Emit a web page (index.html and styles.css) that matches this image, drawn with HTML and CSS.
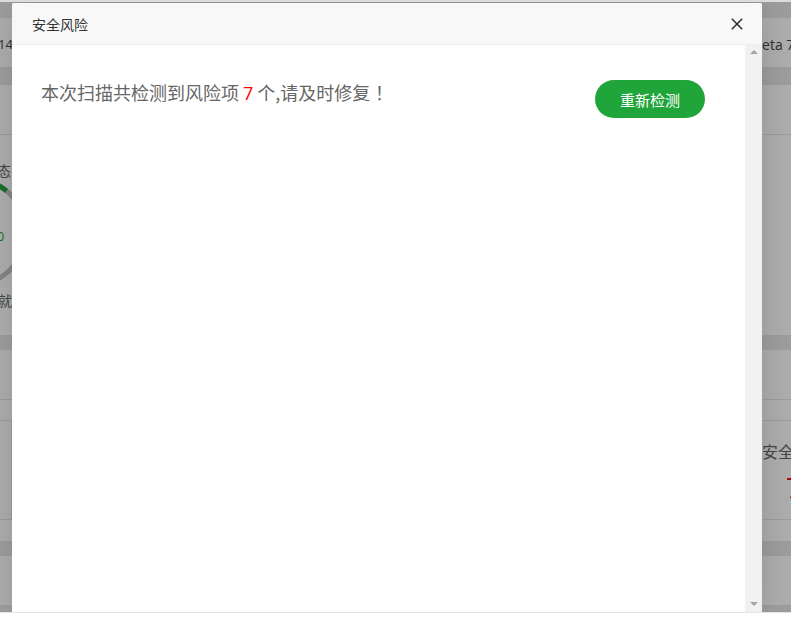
FILE: index.html
```html
<!DOCTYPE html>
<html lang="zh-CN">
<head>
<meta charset="utf-8">
<title>安全风险</title>
<link rel="stylesheet" href="styles.css">
</head>
<body>
<div class="topline"></div>
<div class="stage">
  <div class="page">
    <div class="card card-info">
      <span class="ver-left">14(0)</span>
      <span class="ver-right">Beta 7.4</span>
    </div>
    <div class="card">
      <div class="card-head"></div>
      <div class="card-body gauge-body">
        <svg class="gauge" width="60" height="200" viewBox="0 0 60 200">
          <text x="11" y="41" text-anchor="end" class="g-label">状态</text>
          <circle cx="-27" cy="97" r="53" fill="none" stroke="#c4c4c4" stroke-width="5"/>
          <path d="M -27 44 A 53 53 0 0 1 6.6 56" fill="none" stroke="#20a53a" stroke-width="5"/>
          <text x="4" y="106" text-anchor="end" class="g-value">90</text>
          <text x="-30" y="171" class="g-foot">系统就绪</text>
        </svg>
      </div>
    </div>
    <div class="card">
      <div class="card-head"></div>
      <div class="card-body stats-body">
        <div class="stats">
          <div class="stat stat-main"></div>
          <div class="stat stat-risk">
            <div class="stat-label">安全风险</div>
            <div class="stat-num">7</div>
          </div>
        </div>
      </div>
    </div>
    <div class="card">
      <div class="card-head"></div>
      <div class="card-body"></div>
    </div>
  </div>
  <div class="shade"></div>
  <div class="dialog">
    <div class="dialog-head">
      <span class="dialog-title">安全风险</span>
      <svg class="close" width="12" height="12" viewBox="0 0 12 12">
        <path d="M0.8 0.8 L11.2 11.2 M11.2 0.8 L0.8 11.2" stroke="#2b2b2b" stroke-width="1.5" fill="none"/>
      </svg>
    </div>
    <div class="dialog-body">
      <div class="content">
        <p class="summary">本次扫描共检测到风险项 <span class="red">7</span> 个,请及时修复<span class="bang" lang="zh-TW">！</span></p>
        <button class="btn-recheck">重新检测</button>
      </div>
      <div class="scrollbar">
        <span class="arrow-up"></span>
        <span class="arrow-down"></span>
      </div>
    </div>
  </div>
</div>
<div class="bottomline"></div>
</body>
</html>
```
FILE: styles.css
```css
* { box-sizing: border-box; }
html, body { margin: 0; padding: 0; background: #fff; }
body {
  font-family: "Noto Sans CJK SC", "Noto Sans", sans-serif;
  overflow: hidden;
  height: 626px;
}
.topline { height: 2px; background: #dcdcdc; }
.stage {
  position: relative;
  height: 610px;
  overflow: hidden;
}
.bottomline { height: 1px; background: #e4e4e4; }

/* background page */
.page {
  background: #e8e8e8;
  height: 100%;
  padding-top: 16px;
  display: flex;
  flex-direction: column;
}
.card { background: #fff; flex-shrink: 0; }
.card + .card { margin-top: 15px; }
.card-info {
  height: 49px;
  margin-bottom: 3px;
  display: grid;
  grid-template-columns: 753px 1fr;
  align-items: center;
  padding-top: 3px;
  font-family: "Open Sans", "Liberation Sans", sans-serif;
  font-size: 13px;
  color: #444;
  white-space: nowrap;
  overflow: hidden;
}
.ver-left { margin-left: -2px; }
.ver-right { font-size: 14px; }
.card-head { height: 50px; border-bottom: 1px solid #e6e6e6; }
.gauge-body { height: 200px; position: relative; }
.gauge { position: absolute; left: 0; top: 0; overflow: visible; }
.g-label, .g-foot { font-size: 14px; fill: #666; font-family: "Noto Sans CJK SC", sans-serif; }
.g-value { font-size: 12px; fill: #20a53a; font-family: "Open Sans", sans-serif; }
.stats-body { padding: 20px 0 21px; }
.stats {
  display: grid;
  grid-template-columns: 11px 751px 64px;
  height: 100px;
  border-top: 1px solid #e6e6e6;
  border-bottom: 1px solid #e6e6e6;
}
.stat-main { grid-column: 2; border-left: 1px solid #e6e6e6; }
.stat-risk { text-align: center; white-space: nowrap; }
.stat-label { margin-top: 19px; line-height: 22px; font-size: 16px; color: #666; }
.stat-num {
  margin-top: 8px;
  line-height: 34px;
  font-size: 28px;
  color: #f00;
  font-family: "Open Sans", "Liberation Sans", sans-serif;
}
.shade {
  position: absolute;
  inset: 0;
  background: rgba(0, 0, 0, 0.32);
}

/* dialog */
.dialog {
  position: absolute;
  top: 1px;
  left: 12px;
  width: 750px;
  height: 610px;
  background: #fff;
  display: flex;
  flex-direction: column;
  box-shadow: 1px 1px 30px rgba(0, 0, 0, 0.15);
  border-radius: 2px;
}
.dialog-head {
  height: 42px;
  flex-shrink: 0;
  background: #f8f8f8;
  border-bottom: 1px solid #eee;
  border-radius: 2px 2px 0 0;
  display: flex;
  align-items: center;
  justify-content: space-between;
  padding: 0 19px 0 20px;
}
.dialog-title { font-size: 14px; color: #333; line-height: 42px; }
.close { display: block; margin-top: 1px; }
.dialog-body { flex: 1; display: flex; min-height: 0; }
.content {
  flex: 1;
  display: flex;
  align-items: flex-start;
  justify-content: space-between;
  padding: 35px 40px 0 29px;
}
.summary {
  margin: 0;
  font-size: 18px;
  line-height: 24px;
  color: #666;
}
.bang { font-family: "Noto Sans CJK TC", "Noto Sans CJK SC", sans-serif; }
.red { color: #f00; font-family: "Open Sans", "Liberation Sans", sans-serif; }
.btn-recheck {
  width: 110px;
  height: 38px;
  border: none;
  border-radius: 19px;
  background: #20a53a;
  color: #fff;
  font-family: "Noto Sans CJK SC", sans-serif;
  font-size: 15px;
  padding: 0;
  cursor: pointer;
}
.scrollbar {
  width: 17px;
  flex-shrink: 0;
  background: #f1f1f1;
  display: flex;
  flex-direction: column;
  justify-content: space-between;
  align-items: center;
  padding: 5px 0 7px;
}
.arrow-up, .arrow-down {
  width: 0;
  height: 0;
  border-left: 4px solid transparent;
  border-right: 4px solid transparent;
}
.arrow-up { border-bottom: 4px solid #a3a3a3; }
.arrow-down { border-top: 4px solid #a3a3a3; }
```
